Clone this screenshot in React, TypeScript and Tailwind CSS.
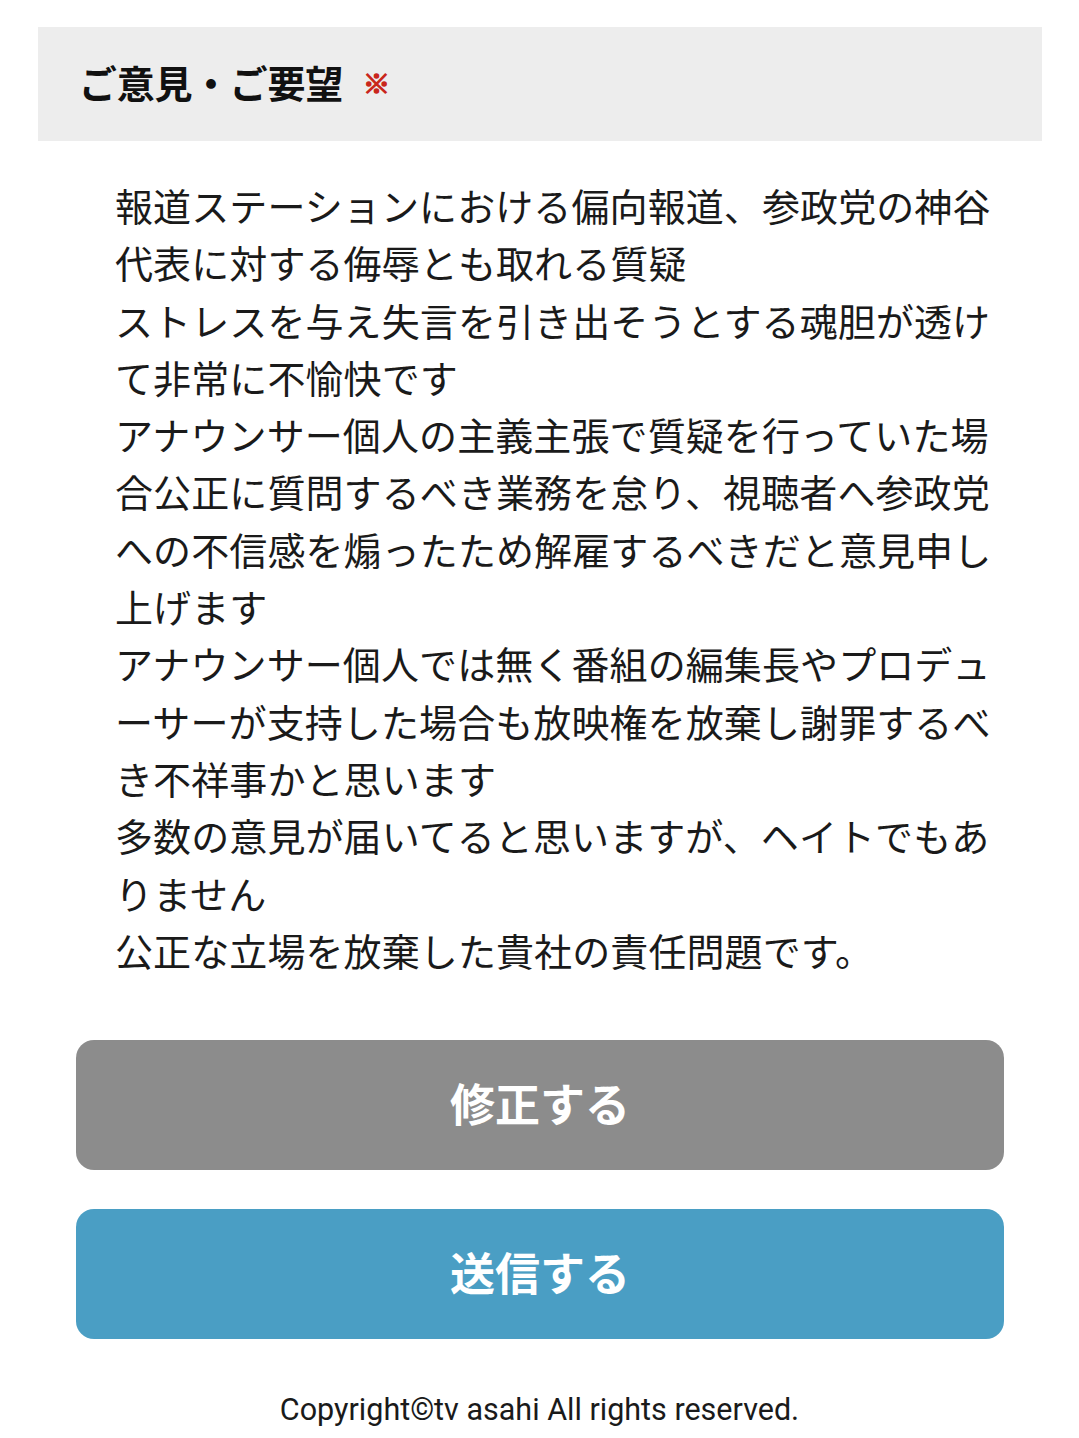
const lines = [
  "報道ステーションにおける偏向報道、参政党の神谷",
  "代表に対する侮辱とも取れる質疑",
  "ストレスを与え失言を引き出そうとする魂胆が透け",
  "て非常に不愉快です",
  "アナウンサー個人の主義主張で質疑を行っていた場",
  "合公正に質問するべき業務を怠り、視聴者へ参政党",
  "への不信感を煽ったため解雇するべきだと意見申し",
  "上げます",
  "アナウンサー個人では無く番組の編集長やプロデュ",
  "ーサーが支持した場合も放映権を放棄し謝罪するべ",
  "き不祥事かと思います",
  "多数の意見が届いてると思いますが、ヘイトでもあ",
  "りません",
  "公正な立場を放棄した貴社の責任問題です。",
];

export default function App() {
  return (
    <div
      className="min-h-[1438px] w-[1079px] bg-white pt-[27px]"
      style={{ fontFamily: '"Noto Sans CJK JP", "Noto Sans", sans-serif' }}
    >
      <div className="ml-[38px] mr-[37px] flex h-[114px] items-center bg-[#ededed] pl-[41px] pb-[4px]">
        <h2 className="text-[38px] font-bold leading-none tracking-[-0.3px] text-[#111]">ご意見・ご要望</h2>
        <span
          className="ml-[20px] text-[27px] font-black leading-none text-[#c9261c]"
          style={{ WebkitTextStroke: "1.5px #c9261c" }}
        >
          ※
        </span>
      </div>

      <div className="ml-[115px] mt-[35px] text-[38px] leading-[57.3px] tracking-[0.1px] text-[#1a1a1a]">
        {lines.map((l, i) => (
          <div key={i} className="whitespace-nowrap">{l}</div>
        ))}
      </div>

      <div className="ml-[76px] mr-[75px] mt-[62px] flex flex-col gap-[39px]">
        <button className="flex h-[130px] w-full items-center justify-center rounded-[18px] bg-[#8c8c8c] pb-[4px] text-[45px] font-bold text-white">
          修正する
        </button>
        <button className="flex h-[130px] w-full items-center justify-center rounded-[18px] bg-[#4a9ec4] pb-[4px] text-[45px] font-bold text-white">
          送信する
        </button>
      </div>

      <p
        className="mt-[50px] text-center text-[30.5px] leading-[42px] text-[#1a1a1a]"
        style={{ fontFamily: 'Roboto, "Noto Sans", sans-serif' }}
      >
        Copyright©tv asahi All rights reserved.
      </p>
    </div>
  );
}
